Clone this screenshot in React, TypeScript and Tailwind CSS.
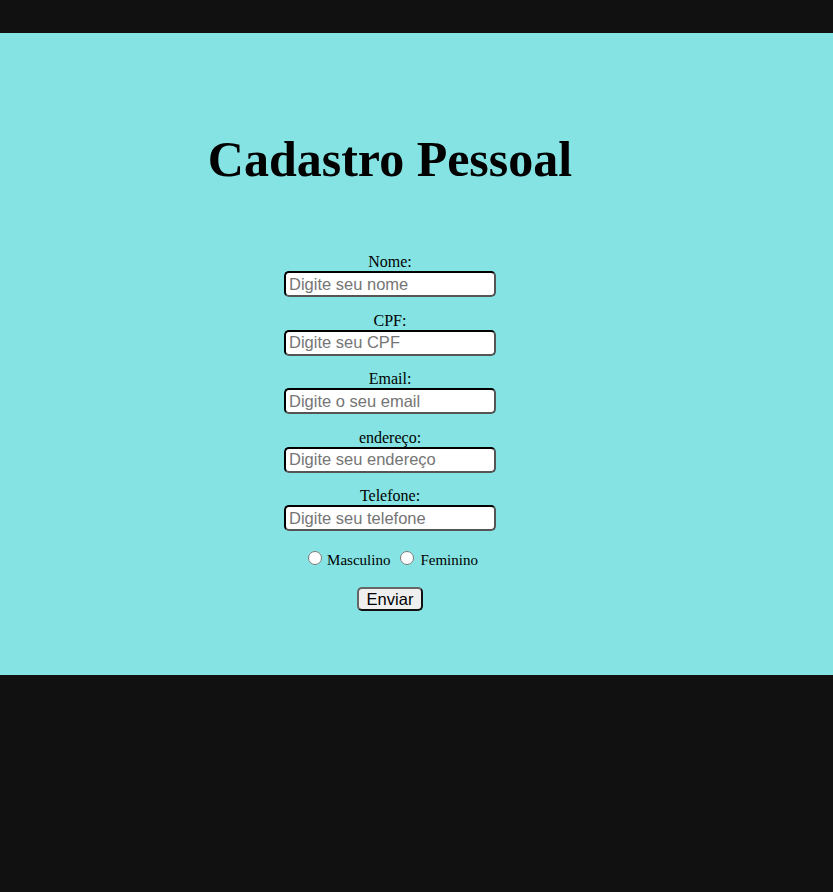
import React from "react";

const fields = [
  { label: "Nome:", ph: "Digite seu nome" },
  { label: "CPF:", ph: "Digite seu CPF" },
  { label: "Email:", ph: "Digite o seu email" },
  { label: "endereço:", ph: "Digite seu endereço" },
  { label: "Telefone:", ph: "Digite seu telefone" },
];

export default function App() {
  return (
    <div className="min-h-[892px] bg-[#111111] pt-[33px] font-['Liberation_Serif','Times_New_Roman',serif] text-black">
      <div className="h-[642px] bg-[#85e3e3]">
        <div className="w-[780px] flex flex-col items-center">
          <h1 className="mt-[99px] text-[50px] font-bold leading-[55px]">Cadastro Pessoal</h1>
          <form className="mt-[66px] flex flex-col items-center">
            {fields.map((f, i) => (
              <div key={i} className="flex flex-col items-center mb-[14.5px]">
                <label className="text-[16px] leading-[18px]">{f.label}</label>
                <input
                  type="text"
                  placeholder={f.ph}
                  className="w-[212px] h-[26px] bg-white border-2 [border-style:inset] border-[#555] rounded-[5px] px-[3px] font-['Liberation_Sans',Arial,sans-serif] text-[16.5px] placeholder:text-[#757575] outline-none"
                />
              </div>
            ))}
            <div className="flex items-end text-[15px] leading-[18px] mt-[5px] ml-[6px]">
              <input type="radio" name="sexo" className="w-[14px] h-[14px] m-0 mb-[4px] mr-[5px] accent-white" />
              <span>Masculino</span>
              <input type="radio" name="sexo" className="w-[14px] h-[14px] m-0 mb-[4px] ml-[10px] mr-[6px] accent-white" />
              <span>Feminino</span>
            </div>
            <button
              type="button"
              className="mt-[18px] h-[24px] px-[8px] bg-[#efefef] border-2 [border-style:outset] border-[#666] rounded-[5px] font-['Liberation_Sans',Arial,sans-serif] text-[16.5px] leading-[18px]"
            >
              Enviar
            </button>
          </form>
        </div>
      </div>
    </div>
  );
}
